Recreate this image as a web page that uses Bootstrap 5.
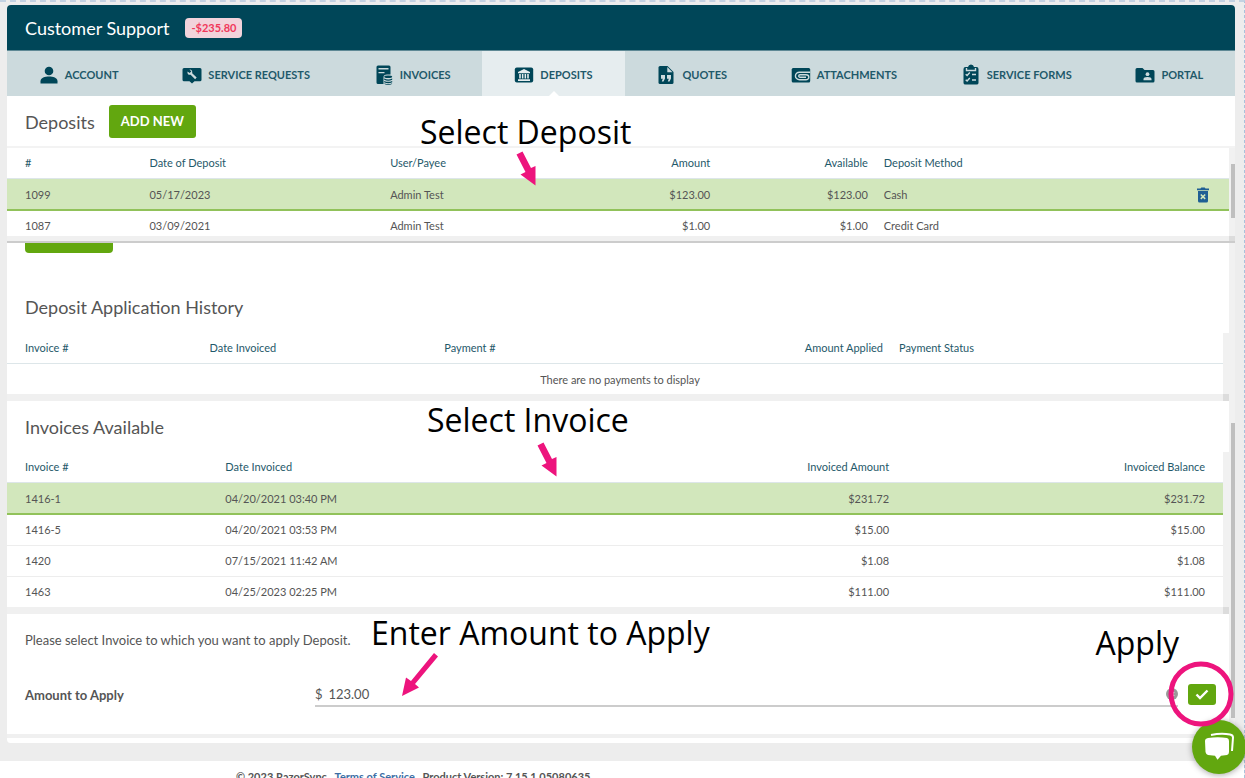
<!DOCTYPE html>
<html lang="en">
<head>
<meta charset="utf-8">
<meta name="viewport" content="width=device-width, initial-scale=1">
<title>Customer Support – Deposits</title>
<link href="https://cdn.jsdelivr.net/npm/bootstrap@5.3.0/dist/css/bootstrap.min.css" rel="stylesheet">
<style>
  :root { --navy: #004658; --green: #62a70f; --pink: #ed147d; --line: #dde6e9; }
  body { font-family: Lato, sans-serif; font-size: 11px; line-height: 16px; color: #555; background: #ededed; height: 100vh; overflow: hidden; border-top: 2px dashed #c3d2e2; border-right: 1px dashed #a9c3dc; }
  .panel { margin: 3px 9px 0 7px; border-radius: 4px; overflow: hidden; background: #fff; }
  .panel-head { background: var(--navy); height: 46px; padding: 0 18px; gap: 16px; border-bottom: 1px solid #5f8995; }
  .panel-head h1 { font-size: 18px; line-height: 24px; color: #fff; }
  .balance { background: #f2d3db; color: #f0385a; font-size: 11px; line-height: 16px; padding: 2px 6px; border-radius: 4px; font-weight: 700; }
  .tabs { background: #ccdadd; }
  .tabs .nav-link { height: 45px; padding: 2px 0 0; border-radius: 0; color: #1f596a; font-size: 11px; font-weight: 700; display: flex; align-items: center; justify-content: center; gap: 6px; text-transform: uppercase; white-space: nowrap; }
  .tabs .nav-link.active { background: #e6edef; color: #1f596a; position: relative; }
  .tabs .nav-link.active::after { content: ""; position: absolute; bottom: 0; left: 50%; margin-left: -5px; border: 5px solid transparent; border-top: 0; border-bottom-color: #fff; }
  .tabs svg { width: 20px; height: 22px; fill: var(--navy); }
  h2 { font-size: 18px; line-height: 24px; color: #555; font-weight: 400; margin: 0; }
  .title-row { height: 52px; padding: 1px 18px 0; gap: 14px; border-bottom: 2px solid #f3f3f3; }
  .btn-go { --bs-btn-bg: var(--green); --bs-btn-color: #fff; --bs-btn-hover-bg: #569309; --bs-btn-hover-color: #fff; font-weight: 700; font-size: 13px; line-height: 19px; padding: 7px 12px; border: 0; border-radius: 3px; }
  .grid-table { --bs-table-bg: transparent; table-layout: fixed; margin: 0; color: #555; font-size: 11px; line-height: 16px; }
  .grid-table > :not(caption) > * > * { padding: 7px 8px; border-bottom: 1px solid #ededed; color: #555; white-space: nowrap; }
  .grid-table > :not(caption) > * > :first-child { padding-left: 18px; }
  .grid-table > thead > tr > th { font-weight: 400; color: #1f596a; border-bottom-color: var(--line); }
  .grid-table > tbody > .chosen > td { background: #d2e7bc; border-bottom: 2px solid #91c25a; padding-top: 8px; padding-bottom: 6px; }
  .grid-table > tbody > tr:last-child > td { border-bottom: 0; }
  .grid-table.deposits > tbody > tr:last-child > td { padding-bottom: 2px; }
  .grid-table > tbody > .blank > td { padding-top: 8px; padding-bottom: 6px; }
  .invoices > :not(caption) > * > :last-child { padding-right: 18px; }
  .track { background: #f1f1f1; flex: 0 0 6px; }
  .track-h { background: #f0f0f0; height: 7px; border-right: 6px solid #dcdcdc; }
  .thumb { background: #bfbfbf; width: 4px; margin-left: 2px; }
  .upper { border-bottom: 2px solid #ccc; }
  .upper .track-h { height: 5px; }
  .upper .thumb { height: 54px; margin-top: 16px; }
  .lower { height: 491px; overflow: hidden; }
  .main-col { min-width: 0; }
  .lower-track { padding-top: 180px; }
  .lower-track .thumb { height: 295px; }
  .cut-btn { height: 10px; width: 88px; padding: 0; border-radius: 0 0 4px 4px; margin-left: 18px; }
  .history-title { padding: 42px 18px 14px; }
  .invoice-title { padding: 14px 18px 13px; }
  .hint { font-size: 13px; line-height: 16px; padding: 18px 18px 34px; margin: 0; }
  .amount-row { padding: 0 13px 0 18px; gap: 10px; font-size: 13px; }
  .amount-row label { width: 23.5%; font-weight: 700; margin: 0; flex: none; }
  .money { border-bottom: 2px solid #ccc; gap: 6px; font-size: 13px; line-height: 20px; height: 25px; }
  .money input { border: 0; padding: 0; font-size: 13px; line-height: 20px; color: #555; background: none; min-height: 0; border-radius: 0; }
  .icon-btn { border: 0; background: none; padding: 0; display: flex; }
  .apply { width: 28px; height: 21px; background: var(--green); border-radius: 3px; align-items: center; justify-content: center; }
  .gap-line { background: #f0f0f0; border-bottom: 5px solid #fff; height: 9px; }
  .page-foot { background: #fff; margin-top: 18px; padding: 8px 0 8px 236px; font-weight: 700; }
  .page-foot a { color: #3c6ea5; text-decoration: none; margin: 0 5px; }
  /* call-outs lie over the screen */
  .callout { position: absolute; font-family: "Open Sans", sans-serif; font-size: 32px; line-height: 40px; color: #000; white-space: nowrap; z-index: 3; }
  .arrow, .ring { position: absolute; fill: var(--pink); z-index: 3; }
  .chat { position: fixed; right: -1px; bottom: 4px; width: 54px; height: 54px; border-radius: 50%; background: var(--green); border: 0; padding: 0; box-shadow: 0 1px 6px rgba(0,0,0,.35); z-index: 2; }
  .c1 { left: 420px; top: 112px; } .a1 { left: 516px; top: 151px; }
  .c2 { left: 427px; top: 400px; } .a2 { left: 537px; top: 442px; }
  .c3 { left: 371px; top: 613px; } .a3 { left: 402px; top: 653px; }
  .c4 { right: 66px; top: 623px; } .ring { right: 11px; top: 661px; }
  .deposits th:nth-child(1) { width: 11%; } .deposits th:nth-child(2) { width: 19.7%; } .deposits th:nth-child(3) { width: 14.6%; }
  .deposits th:nth-child(4) { width: 12.9%; } .deposits th:nth-child(5) { width: 12.9%; } .deposits th:nth-child(7) { width: 4.2%; }
  .history th:nth-child(1) { width: 16%; } .history th:nth-child(2) { width: 19.3%; } .history th:nth-child(3) { width: 24%; } .history th:nth-child(4) { width: 13.4%; }
  .invoices th:nth-child(1) { width: 17.3%; } .invoices th:nth-child(2) { width: 32%; } .invoices th:nth-child(3) { width: 23.9%; }
</style>
</head>
<body>
<main class="panel">
  <header class="panel-head d-flex align-items-center">
    <h1 class="m-0 fw-normal">Customer Support</h1><span class="balance">-$235.80</span>
  </header>
  <nav class="tabs nav nav-fill flex-nowrap">
    <a class="nav-link flex-fill" href="#"><svg viewBox="0 0 20 22"><circle cx="10" cy="7" r="4.3"/><path d="M1.5 19.500v-2.300C1.500 14 6 12.600 10 12.600s8.500 1.400 8.500 4.600v2.300z"/></svg>Account</a>
    <a class="nav-link flex-fill" href="#"><svg viewBox="0 0 20 22"><path fill-rule="evenodd" d="M2 4h16q1.500 0 1.500 1.500v10.300q0 1.500-1.500 1.500h-5.500L10 19.500l-2.500-2.200H2q-1.500 0-1.500-1.500V5.500Q.5 4 2 4zM7.500 5.500l1.800 1.900-1.700 1.700-2-1.700c-.7 2 .8 3.800 3 3.400l4.500 4.400 1.600-1.600-4.500-4.400c.5-2.400-.8-3.900-2.700-3.700z"/></svg>Service Requests</a>
    <a class="nav-link flex-fill" href="#"><svg viewBox="0 0 20 22"><path fill-rule="evenodd" d="M4 1.500h11q1.500 0 1.500 1.500v7.500H13q-3.500 0-3.500 2.500v7H4q-1.500 0-1.500-1.500V3Q2.500 1.500 4 1.500zM4.500 4v1.500h10V4zm0 4v1.300h6V8z"/><ellipse cx="14.200" cy="12.700" rx="4" ry="1.300"/><path d="M10.200 14.500q4 1.800 8 0v1.300q-4 1.900-8 0zm0 2.400q4 1.800 8 0v1.300q-4 1.900-8 0zm0 2.400q4 1.700 8 0-.5 1.600-4 1.600t-4-1.600z"/></svg>Invoices</a>
    <a class="nav-link flex-fill active" aria-current="page" href="#"><svg viewBox="0 0 20 22"><rect x=".8" y="3.500" width="18.400" height="15" rx="2"/><path fill="#e6edef" d="M10 5l6 3v1.200H4V8zM5.200 10h1.600v4.500H5.200zm2.700 0h1.500v4.500H7.900zm2.700 0h1.500v4.500h-1.500zm2.600 0h1.600v4.500h-1.600zM4 15.300h12V17H4z"/></svg>Deposits</a>
    <a class="nav-link flex-fill" href="#"><svg viewBox="0 0 20 22"><path d="M4 2h7.500l6 6v10.500q0 1.500-1.500 1.500H4q-1.500 0-1.500-1.500v-15Q2.500 2 4 2z"/><path fill="#ccdadd" d="M11.300 3v5.200h5.200zM5 11h4v3.500L7.500 17.500H5.800l1-2.700H5zm6 0h4v3.500l-1.500 3h-1.700l1-2.700H11z"/></svg>Quotes</a>
    <a class="nav-link flex-fill" href="#"><svg viewBox="0 0 20 22"><rect x=".7" y="4" width="18.500" height="14.500" rx="1.500"/><path d="M19.200 8.200H8.500a3.800 3.500 0 0 0 0 7.500h6.500a2.600 2.300 0 0 0 0-5H9a1.200 1.200 0 0 0 0 2.500h6" fill="none" stroke="#ccdadd" stroke-width="1.400"/></svg>Attachments</a>
    <a class="nav-link flex-fill" href="#"><svg viewBox="0 0 20 22"><path d="M4.500 3H7q.5-2.500 3-2.500T13 3h2.500Q17.500 3 17.500 5v14q0 1.500-2 1.500h-11q-2 0-2-1.500V5q0-2 2-2z"/><path d="M5.500 4v2.500h9V4M4.700 10.200l1.400 1.300 2.700-3M4.700 15.700L6.100 17l2.700-3M11 10.500h4M11 16h4" fill="none" stroke="#ccdadd" stroke-width="1.400"/></svg>Service Forms</a>
    <a class="nav-link flex-fill" href="#"><svg viewBox="0 0 20 22"><path d="M2 4h5.500l2 2H18q1.500 0 1.500 1.500v9.500q0 1.500-1.500 1.500H2Q.5 18.500.5 17V5.500Q.5 4 2 4z"/><circle cx="12.500" cy="10.200" r="1.900" fill="#ccdadd"/><path fill="#ccdadd" d="M8.500 16.200v-1.100q0-2 4-2t4 2v1.100z"/></svg>Portal</a>
  </nav>
  <div class="title-row d-flex align-items-center"><h2>Deposits</h2><button class="btn btn-go" type="button">ADD NEW</button></div>

  <section class="upper">
    <div class="d-flex">
      <table class="table grid-table deposits main-col">
        <thead><tr><th>#</th><th>Date of Deposit</th><th>User/Payee</th><th class="text-end">Amount</th><th class="text-end">Available</th><th>Deposit Method</th><th></th></tr></thead>
        <tbody>
          <tr class="chosen"><td>1099</td><td>05/17/2023</td><td>Admin Test</td><td class="text-end">$123.00</td><td class="text-end">$123.00</td><td>Cash</td>
            <td><button class="icon-btn mx-auto" type="button" aria-label="Delete deposit"><svg width="12" height="16" viewBox="0 0 12 16" fill="#1f5f94"><path d="M0 1.500h3.500L4.300.5h3.400l.8 1H12v1.700H0zM1 4h10v10q0 1.500-1.500 1.500h-7Q1 15.500 1 14z"/><path d="M3.800 7.500l4.400 4.400m0-4.400l-4.400 4.400" stroke="#d2e7bc" stroke-width="1.500"/></svg></button></td></tr>
          <tr><td>1087</td><td>03/09/2021</td><td>Admin Test</td><td class="text-end">$1.00</td><td class="text-end">$1.00</td><td>Credit Card</td><td></td></tr>
        </tbody>
      </table>
      <div class="track"><div class="thumb"></div></div>
    </div>
    <div class="track-h"></div>
  </section>

  <section class="lower d-flex">
    <div class="main-col flex-grow-1">
      <button class="btn btn-go cut-btn d-block" type="button" aria-label="Save"></button>
      <h2 class="history-title">Deposit Application History</h2>
      <div class="d-flex">
        <table class="table grid-table history main-col">
          <thead><tr><th>Invoice #</th><th>Date Invoiced</th><th>Payment #</th><th class="text-end">Amount Applied</th><th>Payment Status</th></tr></thead>
          <tbody><tr class="blank"><td colspan="5" class="text-center">There are no payments to display</td></tr></tbody>
        </table>
        <div class="track"></div>
      </div>
      <div class="track-h"></div>
      <h2 class="invoice-title">Invoices Available</h2>
      <div class="d-flex">
        <table class="table grid-table invoices main-col">
          <thead><tr><th>Invoice #</th><th>Date Invoiced</th><th class="text-end">Invoiced Amount</th><th class="text-end">Invoiced Balance</th></tr></thead>
          <tbody>
            <tr class="chosen"><td>1416-1</td><td>04/20/2021 03:40 PM</td><td class="text-end">$231.72</td><td class="text-end">$231.72</td></tr>
            <tr><td>1416-5</td><td>04/20/2021 03:53 PM</td><td class="text-end">$15.00</td><td class="text-end">$15.00</td></tr>
            <tr><td>1420</td><td>07/15/2021 11:42 AM</td><td class="text-end">$1.08</td><td class="text-end">$1.08</td></tr>
            <tr><td>1463</td><td>04/25/2023 02:25 PM</td><td class="text-end">$111.00</td><td class="text-end">$111.00</td></tr>
          </tbody>
        </table>
        <div class="track"></div>
      </div>
      <div class="track-h"></div>
      <p class="hint">Please select Invoice to which you want to apply Deposit.</p>
      <div class="amount-row d-flex align-items-center">
        <label for="amount">Amount to Apply</label>
        <div class="money d-flex align-items-center flex-grow-1">
          <span>$</span><input id="amount" class="form-control shadow-none" type="text" value="123.00">
          <button class="icon-btn" type="button" aria-label="Clear amount"><svg width="12" height="12" viewBox="0 0 12 12"><circle cx="6" cy="6" r="6" fill="#999"/><path d="M4 4l4 4m0-4L4 8" stroke="#fff" stroke-width="1.500"/></svg></button>
        </div>
        <button class="icon-btn apply" type="button" aria-label="Apply"><svg width="14" height="11" viewBox="0 0 14 11"><path d="M1.500 5.500l3.500 3.500 7.500-7.500" fill="none" stroke="#fff" stroke-width="2.400"/></svg></button>
      </div>
    </div>
    <div class="track lower-track"><div class="thumb"></div></div>
  </section>
  <div class="gap-line"></div>
</main>
<footer class="page-foot">© 2023 RazorSync <a href="#">Terms of Service</a> Product Version: 7.15.1.05080635</footer>

<div class="callout c1">Select Deposit</div>
<svg class="arrow a1" width="20" height="35"><path d="M.5 3.500L6.500.5l8.500 16.500 4.500-2v19.500L4.500 23.500l5-2.500z"/></svg>
<div class="callout c2">Select Invoice</div>
<svg class="arrow a2" width="20" height="35"><path d="M.5 3.500L6.500.5l8.500 16.500 4.500-2v19.500L4.500 23.500l5-2.500z"/></svg>
<div class="callout c3">Enter Amount to Apply</div>
<svg class="arrow a3" width="36" height="43"><path d="M32 0l4 3.500L13 31l4 3.500L0 43l4-18.500 5 3.500z"/></svg>
<div class="callout c4">Apply</div>
<svg class="ring" width="66" height="66"><circle cx="33" cy="33" r="30" fill="none" stroke="#ed147d" stroke-width="5"/></svg>
<button class="chat" type="button" aria-label="Chat"><svg width="54" height="54" viewBox="0 0 54 54" fill="#fff"><path d="M16 18q10-1.500 19 0 2 .5 2 3v11q0 2.500-2 3l-6 .7-3.500 4-2.500-4-7-.7q-2-.5-2.500-3l-.5-11q0-2.500 3-3z"/><path d="M19 15q10-2 19-.5 3 .5 3 3L40 31" fill="none" stroke="#fff" stroke-width="2"/></svg></button>
<script src="https://cdn.jsdelivr.net/npm/bootstrap@5.3.0/dist/js/bootstrap.bundle.min.js"></script>
</body>
</html>
